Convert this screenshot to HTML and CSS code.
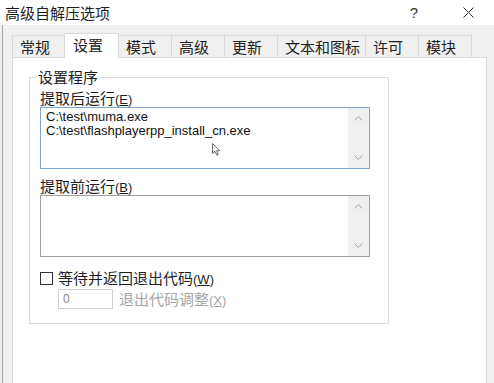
FILE: index.html
```html
<!DOCTYPE html>
<html lang="zh-CN">
<head>
    <meta charset="UTF-8">
    <title>高级自解压选项</title>
    <link rel="stylesheet" href="styles.css">
</head>
<body>
    <div class="titlebar">
        <span class="title">高级自解压选项</span>
        <span class="help">?</span>
        <svg class="close" viewBox="0 0 11 11"><path d="M0.5 0.5 L10.5 10.5 M10.5 0.5 L0.5 10.5" /></svg>
    </div>

    <div class="client">
        <div class="tabs">
            <div class="tab">常规</div>
            <div class="tab active">设置</div>
            <div class="tab">模式</div>
            <div class="tab">高级</div>
            <div class="tab">更新</div>
            <div class="tab">文本和图标</div>
            <div class="tab">许可</div>
            <div class="tab">模块</div>
        </div>

        <div class="panel">
            <fieldset class="group">
                <legend>设置程序</legend>

                <div class="label">提取后运行<span class="key">(<u>E</u>)</span></div>
                <div class="box focused">
                    <div class="lines">C:\test\muma.exe<br>C:\test\flashplayerpp_install_cn.exe</div>
                    <div class="scroll">
                        <svg class="chev" viewBox="0 0 9 5"><path d="M0.5 4.5 L4.5 0.5 L8.5 4.5" /></svg>
                        <svg class="chev" viewBox="0 0 9 5"><path d="M0.5 0.5 L4.5 4.5 L8.5 0.5" /></svg>
                    </div>
                    <svg class="pointer" viewBox="0 0 9 13"><path d="M0.5 0.5 L0.5 10.5 L3 8.3 L4.8 12.3 L6.3 11.6 L4.6 7.8 L8 7.8 Z" /></svg>
                </div>

                <div class="label second">提取前运行<span class="key">(<u>B</u>)</span></div>
                <div class="box">
                    <div class="lines"></div>
                    <div class="scroll">
                        <svg class="chev" viewBox="0 0 9 5"><path d="M0.5 4.5 L4.5 0.5 L8.5 4.5" /></svg>
                        <svg class="chev" viewBox="0 0 9 5"><path d="M0.5 0.5 L4.5 4.5 L8.5 0.5" /></svg>
                    </div>
                </div>

                <div class="check-row">
                    <span class="checkbox"></span>
                    <span>等待并返回退出代码<span class="key">(<u>W</u>)</span></span>
                </div>
                <div class="num-row">
                    <div class="num">0</div>
                    <span class="disabled">退出代码调整<span class="key">(<u>X</u>)</span></span>
                </div>
            </fieldset>
        </div>
    </div>
</body>
</html>
```

FILE: styles.css
```css
body {
    margin: 0;
    height: 383px;
    overflow: hidden;
    background: #f0f0f0;
    font-family: "Noto Sans CJK SC", sans-serif;
    font-size: 15px;
    color: #1e1e1e;
}
.titlebar {
    height: 25px;
    background: #fff;
    display: flex;
    align-items: center;
    padding-left: 5px;
}
.title {
    flex: 1;
    line-height: 25px;
}
.help {
    font-family: "Liberation Sans", sans-serif;
    font-size: 15px;
    color: #333;
    margin-right: 45px;
}
.close {
    width: 11px;
    height: 11px;
    margin-right: 20px;
}
.close path {
    stroke: #333;
    stroke-width: 1;
    fill: none;
}
.client {
    margin-left: 2px;
    border-left: 1px solid #a9a9a9;
    padding: 8px 7px 0 9px;
    height: 358px;
    box-sizing: border-box;
    display: flex;
    flex-direction: column;
}
.tabs {
    display: flex;
    align-items: flex-end;
}
.tab {
    min-width: 54px;
    box-sizing: border-box;
    height: 22px;
    padding: 0 5px 0 7px;
    line-height: 21px;
    border: 1px solid #d9d9d9;
    border-bottom: none;
    margin-right: -1px;
    background: #f0f0f0;
}
.tab.active {
    height: 25px;
    min-width: 55px;
    line-height: 22px;
    padding-left: 8px;
    background: #fff;
    margin: 0 -1px -1px -1px;
    position: relative;
    z-index: 1;
}
.panel {
    flex: 1;
    background: #fff;
    border: 1px solid #d9d9d9;
    border-bottom: none;
    padding: 9px 0 0 16px;
}
.group {
    margin: 0;
    width: 360px;
    min-width: 0;
    box-sizing: border-box;
    border: 1px solid #dcdcdc;
    padding: 2px 18px 14px 10px;
}
.group legend {
    padding: 0 2px;
    margin-left: -4px;
    line-height: 20px;
}
.label {
    line-height: 18px;
}
.label.second {
    margin-top: 8px;
}
.key {
    font-family: "Liberation Sans", sans-serif;
    font-size: 13px;
    line-height: 1;
}
.box {
    display: flex;
    height: 62px;
    box-sizing: border-box;
    border: 1px solid #a0a0a0;
    background: #fff;
    position: relative;
}
.box.focused {
    border-color: #7aa7d6;
}
.lines {
    flex: 1;
    padding: 2px 5px;
    font-family: "Liberation Sans", sans-serif;
    font-size: 13px;
    line-height: 14px;
    color: #111;
}
.scroll {
    width: 21px;
    background: #f0f0f0;
    display: flex;
    flex-direction: column;
    justify-content: space-between;
    align-items: center;
    padding: 8px 0;
}
.chev {
    width: 9px;
    height: 5px;
}
.chev path {
    fill: none;
    stroke: #a6a6a6;
    stroke-width: 1;
}
.pointer {
    position: absolute;
    left: 171px;
    top: 35px;
    width: 9px;
    height: 13px;
}
.pointer path {
    fill: #fff;
    stroke: #666;
    stroke-width: 1;
}
.check-row {
    margin-top: 12px;
    display: flex;
    align-items: center;
    gap: 5px;
    line-height: 18px;
}
.checkbox {
    width: 13px;
    height: 13px;
    box-sizing: border-box;
    border: 1px solid #333;
    background: #fff;
}
.num-row {
    margin-top: 2px;
    padding-left: 18px;
    display: flex;
    align-items: center;
    gap: 6px;
}
.num {
    width: 55px;
    height: 20px;
    box-sizing: border-box;
    border: 1px solid #d0d0d0;
    padding-left: 4px;
    font-family: "Liberation Sans", sans-serif;
    font-size: 12px;
    line-height: 18px;
    color: #8a8a8a;
}
.disabled {
    color: #a6a6a6;
    line-height: 18px;
}
```
